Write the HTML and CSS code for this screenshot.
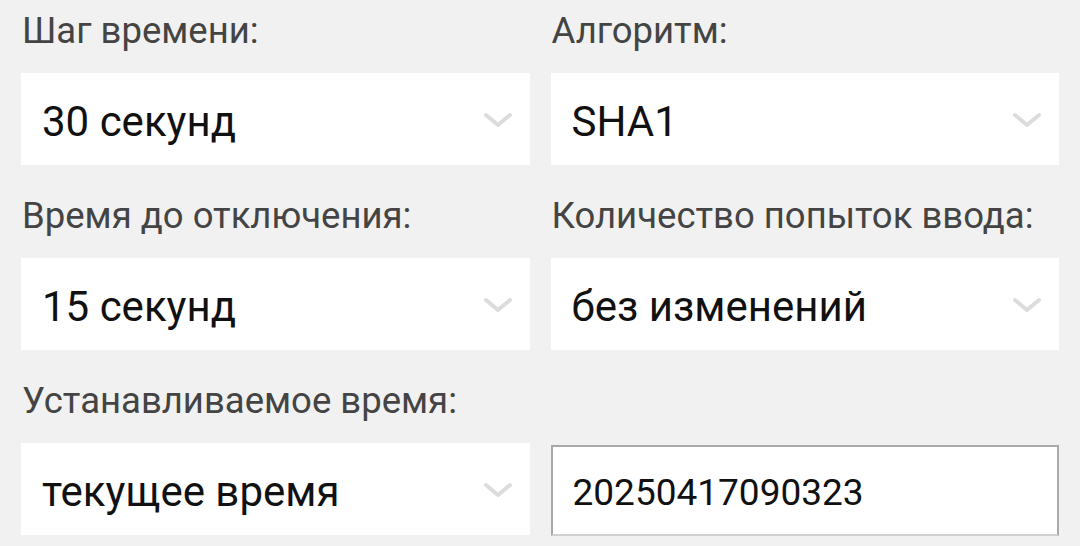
FILE: index.html
```html
<!DOCTYPE html>
<html lang="ru">
<head>
  <meta charset="UTF-8">
  <meta name="viewport" content="width=device-width, initial-scale=1">
  <title>Настройки</title>
  <link rel="stylesheet" href="styles.css">
</head>
<body>
  <div class="form">
    <div class="field">
      <p class="label">Шаг времени:</p>
      <div class="select">
        <span class="value">30 секунд</span>
        <svg class="chevron" viewBox="0 0 30 18"><polyline points="3,4 15,14 27,4"/></svg>
      </div>
    </div>
    <div class="field">
      <p class="label">Алгоритм:</p>
      <div class="select">
        <span class="value">SHA1</span>
        <svg class="chevron" viewBox="0 0 30 18"><polyline points="3,4 15,14 27,4"/></svg>
      </div>
    </div>

    <div class="field">
      <p class="label">Время до отключения:</p>
      <div class="select">
        <span class="value">15 секунд</span>
        <svg class="chevron" viewBox="0 0 30 18"><polyline points="3,4 15,14 27,4"/></svg>
      </div>
    </div>
    <div class="field">
      <p class="label">Количество попыток ввода:</p>
      <div class="select">
        <span class="value">без изменений</span>
        <svg class="chevron" viewBox="0 0 30 18"><polyline points="3,4 15,14 27,4"/></svg>
      </div>
    </div>

    <div class="field">
      <p class="label">Устанавливаемое время:</p>
      <div class="select">
        <span class="value">текущее время</span>
        <svg class="chevron" viewBox="0 0 30 18"><polyline points="3,4 15,14 27,4"/></svg>
      </div>
    </div>
    <div class="field">
      <p class="label"></p>
      <input class="time-input" type="text" value="20250417090323">
    </div>
  </div>
</body>
</html>
```

FILE: styles.css
```css
* {
  box-sizing: border-box;
  margin: 0;
  padding: 0;
}

html, body {
  background-color: #f1f1f1;
  font-family: Roboto, "Noto Sans", sans-serif;
}

.form {
  display: grid;
  grid-template-columns: 1fr 1fr;
  column-gap: 21px;
  row-gap: 20px;
  padding: 0 21px;
}

.label {
  height: 73px;
  padding-top: 6px;
  padding-left: 1px;
  line-height: 50px;
  font-size: 36.5px;
  color: #444;
  white-space: nowrap;
}

.select {
  display: flex;
  align-items: center;
  justify-content: space-between;
  height: 92px;
  padding: 4px 17px 0 21px;
  background-color: white;
}

.value {
  font-size: 42px;
  color: #111;
}

.chevron {
  width: 30px;
  height: 18px;
  margin-top: -2px;
  fill: none;
  stroke: #dcdcdc;
  stroke-width: 4;
  stroke-linecap: round;
  stroke-linejoin: round;
}

.time-input {
  display: block;
  width: 100%;
  height: 91px;
  margin-top: 2px;
  padding: 4px 0 0 20px;
  border: 2px solid #a9a9a9;
  border-bottom-color: #d0d0d0;
  background-color: white;
  font-family: Roboto, "Noto Sans", sans-serif;
  font-size: 37px;
  color: #111;
  outline: none;
}
```
